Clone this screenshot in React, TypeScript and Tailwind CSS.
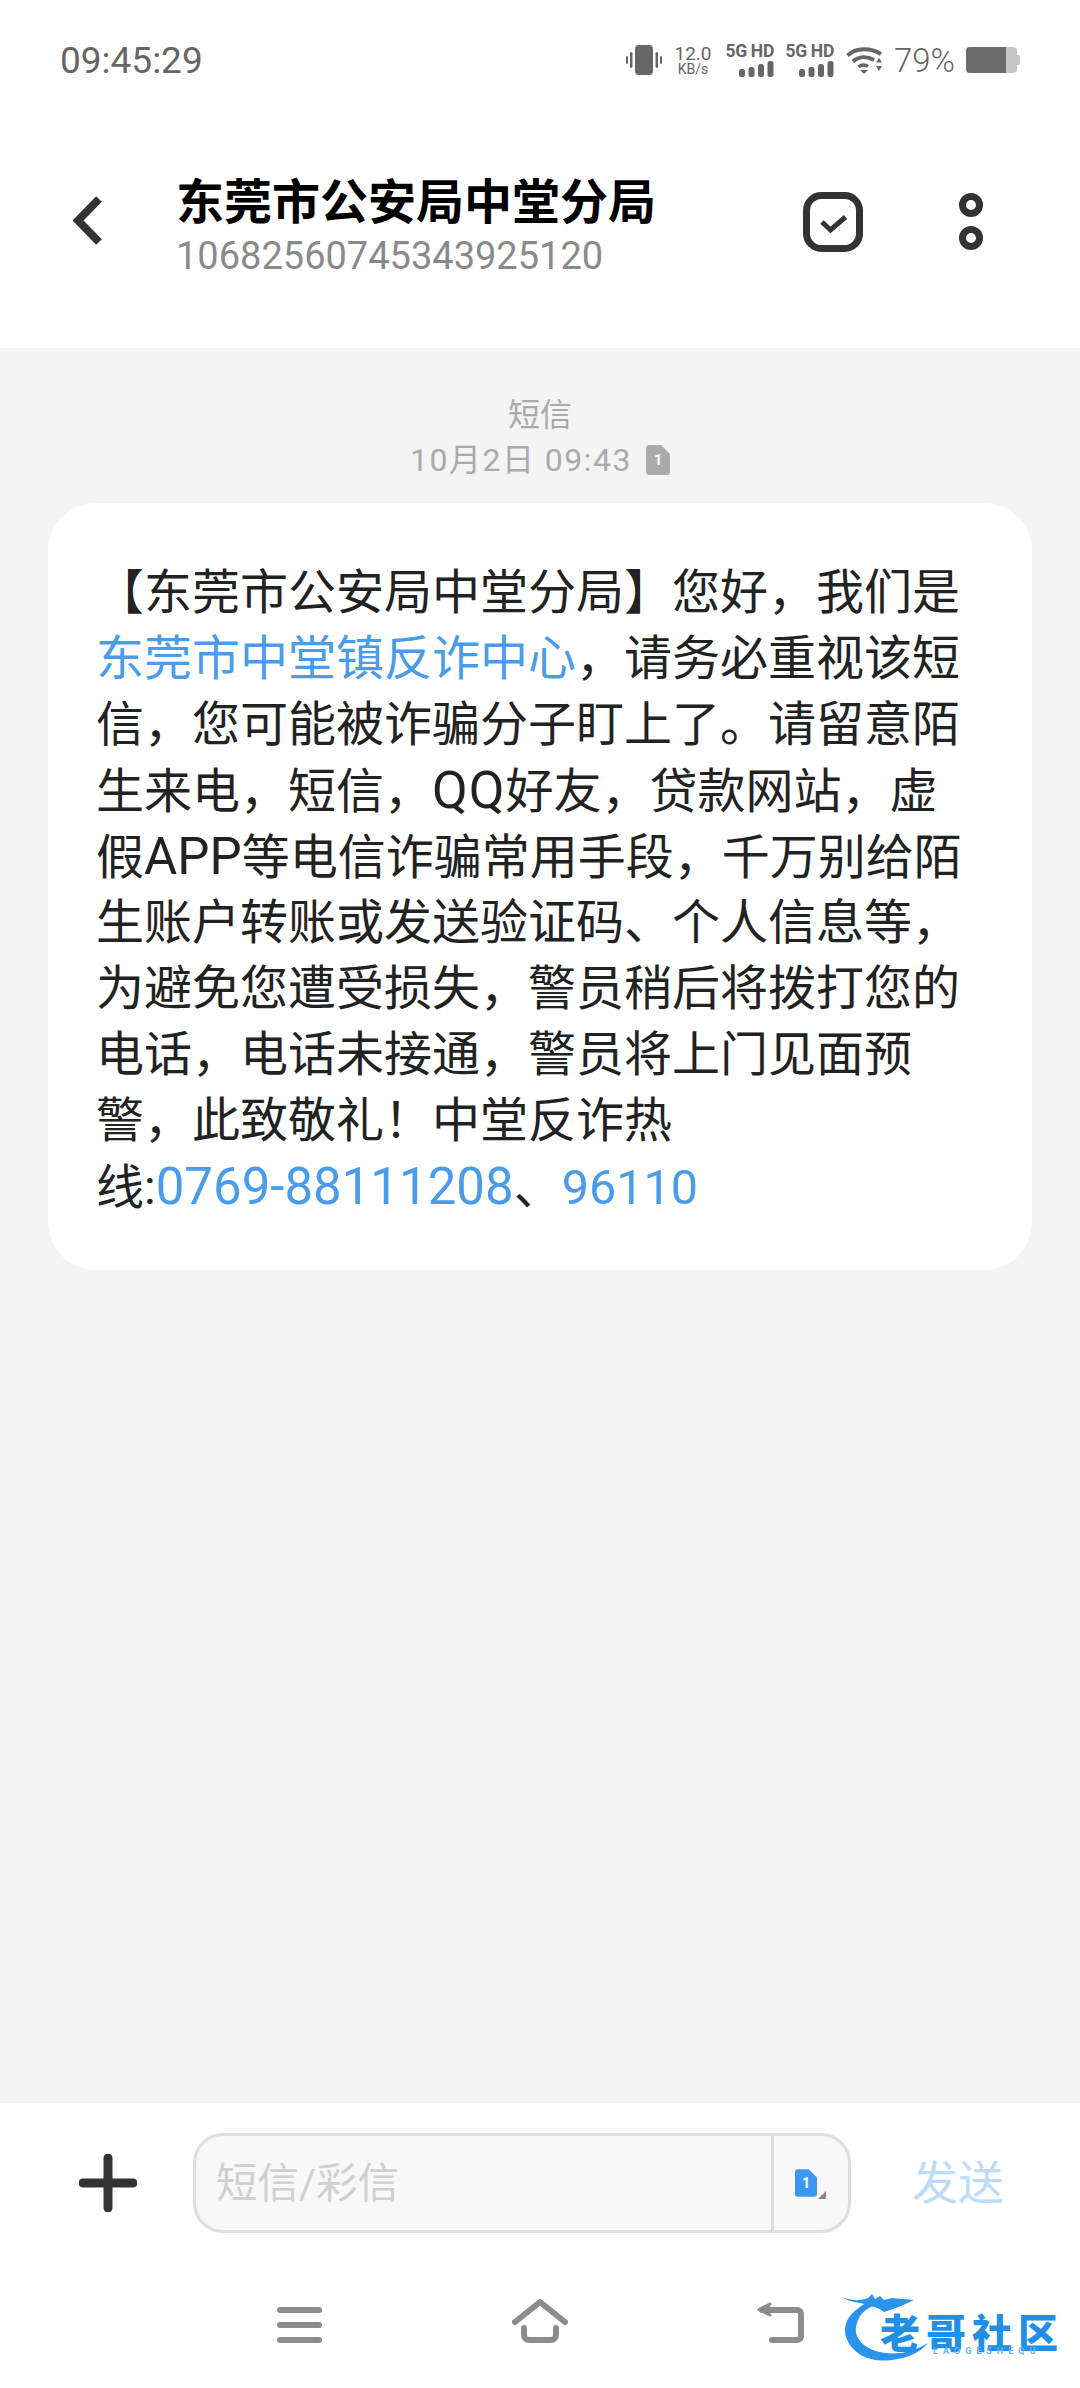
const cjk = '"Roboto","Noto Sans CJK SC",sans-serif';

function Vibrate() {
  return (
    <svg width="36" height="30" viewBox="0 0 36 30" fill="#666">
      <rect x="9" y="0" width="18" height="30" rx="4" />
      <rect x="4" y="7" width="2.5" height="16" rx="1.2" />
      <rect x="0" y="11" width="2" height="8" rx="1" />
      <rect x="29.5" y="7" width="2.5" height="16" rx="1.2" />
      <rect x="34" y="11" width="2" height="8" rx="1" />
    </svg>
  );
}

function Signal() {
  return (
    <div className="flex w-[48px] flex-col items-end leading-none">
      <span className="text-[17.5px] font-bold leading-[15px] tracking-[-0.3px] whitespace-nowrap text-[#666]" style={{ fontFamily: '"Roboto",sans-serif' }}>5G HD</span>
      <svg className="mt-[2px]" width="35" height="16" viewBox="0 0 35 16" fill="#666">
        <rect x="0" y="8" width="6" height="8" rx="2.5" />
        <rect x="9.5" y="6" width="6" height="10" rx="2.5" />
        <rect x="19" y="3" width="6" height="13" rx="2.5" />
        <rect x="28.5" y="0" width="6" height="16" rx="2.5" />
      </svg>
    </div>
  );
}

function Wifi() {
  return (
    <svg width="37" height="28" viewBox="0 0 37 28" fill="none" stroke="#666">
      <path d="M1.5 9.5C10 1.5 24 1.5 35 8" strokeWidth="4" />
      <path d="M7 15.5C13 10 21 10 28 14" strokeWidth="4" />
      <path d="M12.5 21C15.5 18.5 19 18.5 22 20.5" strokeWidth="3.5" />
      <path d="M14 24h8l-4 4z" fill="#666" stroke="none" />
      <path d="M30 16.5l3-4.5 3 4.5z" fill="#666" stroke="none" />
      <path d="M30 20h6l-3 5z" fill="#666" stroke="none" />
    </svg>
  );
}

function Battery() {
  return (
    <svg width="54" height="26" viewBox="0 0 54 26">
      <rect x="0" y="0" width="51" height="26" rx="4" fill="#c6c6c6" />
      <path d="M4 0h36v26H4a4 4 0 0 1-4-4V4a4 4 0 0 1 4-4z" fill="#6b6b6b" />
      <path d="M51 8h1a2 2 0 0 1 2 2v6a2 2 0 0 1-2 2h-1z" fill="#c6c6c6" />
    </svg>
  );
}

function SimIcon({ w, h, color }: { w: number; h: number; color: string }) {
  return (
    <div className="relative flex items-center justify-center" style={{ width: w, height: h }}>
      <svg className="absolute inset-0" width={w} height={h} viewBox="0 0 24 30">
        <path d="M3 0h12l9 9v18a3 3 0 0 1-3 3H3a3 3 0 0 1-3-3V3a3 3 0 0 1 3-3z" fill={color} />
      </svg>
      <span className="relative text-[15px] font-bold leading-none text-white" style={{ fontFamily: '"Roboto",sans-serif' }}>1</span>
    </div>
  );
}

function Logo() {
  return (
    <div className="absolute left-[842px] top-[2293px] h-[70px] w-[225px]">
      <svg className="absolute left-0 top-0" width="90" height="70" viewBox="0 0 90 70" fill="#2a93ec">
        <path d="M28 8C8 18 0 30 4 44c6 18 26 26 46 23 15-2 28-7 36-17-12 7-26 12-42 10C24 58 12 46 14 34c2-12 10-20 22-22z" />
        <path d="M0 4c10 4 18 4 26 1l4-4 3 5 5-3 4 4 8-2 22 2c-10 5-20 9-30 12-6-5-16-7-24-9C10 9 4 7 0 4z" />
      </svg>
      <span className="absolute left-[38px] top-[22px] whitespace-nowrap text-[40px] font-black leading-[32px] tracking-[6px] text-[#1f8fe8]" style={{ fontFamily: '"Noto Sans CJK SC",sans-serif' }}>老哥社区</span>
      <span className="absolute left-[91px] top-[54px] whitespace-nowrap text-[9px] font-bold leading-[9px] tracking-[5px] text-[#66b3ef]" style={{ fontFamily: '"Roboto",sans-serif' }}>LAOGESHEQU</span>
    </div>
  );
}

const L = ({ children }: { children: React.ReactNode }) => (
  <span className="text-[#4a9ce8]">{children}</span>
);
const W = ({ children }: { children: React.ReactNode }) => (
  <span className="text-[51px]">{children}</span>
);

const lines: React.ReactNode[] = [
  '【东莞市公安局中堂分局】您好，我们是',
  <><L>东莞市中堂镇反诈中心</L>，请务必重视该短</>,
  '信，您可能被诈骗分子盯上了。请留意陌',
  <>生来电，短信，<span className="text-[52px] tracking-[1px]">QQ</span>好友，贷款网站，虚</>,
  <>假<W>APP</W>等电信诈骗常用手段，千万别给陌</>,
  '生账户转账或发送验证码、个人信息等，',
  '为避免您遭受损失，警员稍后将拨打您的',
  '电话，电话未接通，警员将上门见面预',
  '警，此致敬礼！中堂反诈热',
  <>线:<L><W>0769-88111208</W></L>、<L><span className="text-[48.5px]">96110</span></L></>,
];

export default function App() {
  return (
    <div className="relative flex h-[2388px] w-[1080px] flex-col overflow-hidden bg-white" style={{ fontFamily: cjk }}>
      {/* Status bar */}
      <div className="flex h-[118px] shrink-0 items-center pl-[60px] pr-[60px] pt-[2px]">
        <span className="text-[37px] leading-none text-[#666]">09:45:29</span>
        <div className="ml-auto flex items-center">
          <Vibrate />
          <div className="ml-[13px] flex w-[36px] flex-col items-center leading-none text-[#666]">
            <span className="text-[19px] leading-[17px]">12.0</span>
            <span className="text-[14px] leading-[14px]">KB/s</span>
          </div>
          <div className="ml-[15px]"><Signal /></div>
          <div className="ml-[12px]"><Signal /></div>
          <div className="ml-[12px]"><Wifi /></div>
          <span className="ml-[11px] w-[60px] text-[33px] font-light leading-none text-[#666]">79%</span>
          <div className="ml-[12px]"><Battery /></div>
        </div>
      </div>

      {/* Header */}
      <div className="flex h-[230px] shrink-0 items-start">
        <svg className="ml-[73px] mt-[78px] shrink-0" width="30" height="50" viewBox="0 0 30 50" fill="none">
          <path d="M26 3L5 24.5 26 46" stroke="#333" strokeWidth="8" />
        </svg>
        <div className="ml-[73px] mt-[57px] flex w-[560px] flex-col">
          <span className="text-[48px] font-bold leading-[56px] text-black">东莞市公安局中堂分局</span>
          <span className="mt-[1px] text-[38px] leading-[48px] text-[#8a8a8a]">10682560745343925120</span>
        </div>
        <svg className="ml-[67px] mt-[74px] shrink-0" width="60" height="60" viewBox="0 0 60 60" fill="none">
          <rect x="3.5" y="3.5" width="53" height="53" rx="15" stroke="#333" strokeWidth="7" />
          <path d="M19 30l8.5 8 15-13" stroke="#333" strokeWidth="5" />
        </svg>
        <svg className="ml-[96px] mt-[75px] shrink-0" width="24" height="57" viewBox="0 0 24 57" fill="none">
          <circle cx="12" cy="12" r="8.5" stroke="#333" strokeWidth="7" />
          <circle cx="12" cy="45" r="8.5" stroke="#333" strokeWidth="7" />
        </svg>
      </div>

      {/* Messages */}
      <div className="flex flex-1 flex-col items-center bg-[#f4f4f4] pt-[47px]">
        <span className="text-[32px] leading-[40px] text-[#aaaaaa]">短信</span>
        <div className="mt-[5px] flex items-center text-[#aaaaaa]">
          <span className="text-[32px] leading-[40px] tracking-[1.5px]">10月2日 09:43</span>
          <div className="ml-[14px]"><SimIcon w={24} h={30} color="#aaaaaa" /></div>
        </div>
        <div className="mt-[23px] w-[984px] rounded-[48px] bg-white pb-[50px] pl-[48px] pt-[57px] text-[48px] leading-[66px] text-[#222]">
          {lines.map((l, i) => (
            <div key={i} className="h-[66px] whitespace-nowrap">{l}</div>
          ))}
        </div>
      </div>

      {/* Input row */}
      <div className="flex h-[285px] shrink-0 flex-col">
        <div className="mt-[30px] flex items-center">
          <svg className="ml-[79px] shrink-0" width="58" height="58" viewBox="0 0 58 58" fill="none">
            <path d="M29 4v50M4 29h50" stroke="#333" strokeWidth="9" strokeLinecap="round" />
          </svg>
          <div className="ml-[56px] flex h-[100px] w-[658px] shrink-0 items-stretch rounded-[30px] border-[3px] border-[#dedede] bg-[#f8f8f8]">
            <div className="flex flex-1 items-center pl-[20px] pt-[2px] text-[41.5px] leading-none text-[#d0d0d0]">短信/彩信</div>
            <div className="relative flex w-[77px] items-center border-l-[3px] border-[#dedede] pl-[21px]">
              <SimIcon w={22} h={28} color="#3b97f2" />
              <svg className="absolute left-[44px] top-[55px]" width="8" height="8" viewBox="0 0 8 8">
                <path d="M8 0v8H0z" fill="#888" />
              </svg>
            </div>
          </div>
          <span className="ml-[61px] text-[46px] leading-none text-[#bcdcf8]">发送</span>
        </div>
        <div className="relative mt-[66px] flex items-start">
          <svg className="ml-[277px] mt-[8px] shrink-0" width="45" height="36" viewBox="0 0 45 36" fill="none" stroke="#8c8c8c" strokeWidth="6" strokeLinecap="round">
            <path d="M3 3h39M3 18h39M3 33h39" />
          </svg>
          <svg className="ml-[190px] shrink-0" width="56" height="46" viewBox="0 0 56 46" fill="none" stroke="#8c8c8c" strokeWidth="6" strokeLinecap="round" strokeLinejoin="round">
            <path d="M3 23L28 3l25 20" />
            <path d="M12 29v7a5 5 0 0 0 5 5h22a5 5 0 0 0 5-5v-7" />
          </svg>
          <svg className="ml-[188px] mt-[2px] shrink-0" width="50" height="44" viewBox="0 0 50 44" fill="none" stroke="#8c8c8c" strokeWidth="6" strokeLinecap="round" strokeLinejoin="round">
            <path d="M16 39h25a4 4 0 0 0 4-4V13a4 4 0 0 0-4-4H6" />
            <path d="M14 3L3 8.5 14 14" fill="#8c8c8c" strokeWidth="3" />
          </svg>
        </div>
      </div>
      <Logo />
    </div>
  );
}
